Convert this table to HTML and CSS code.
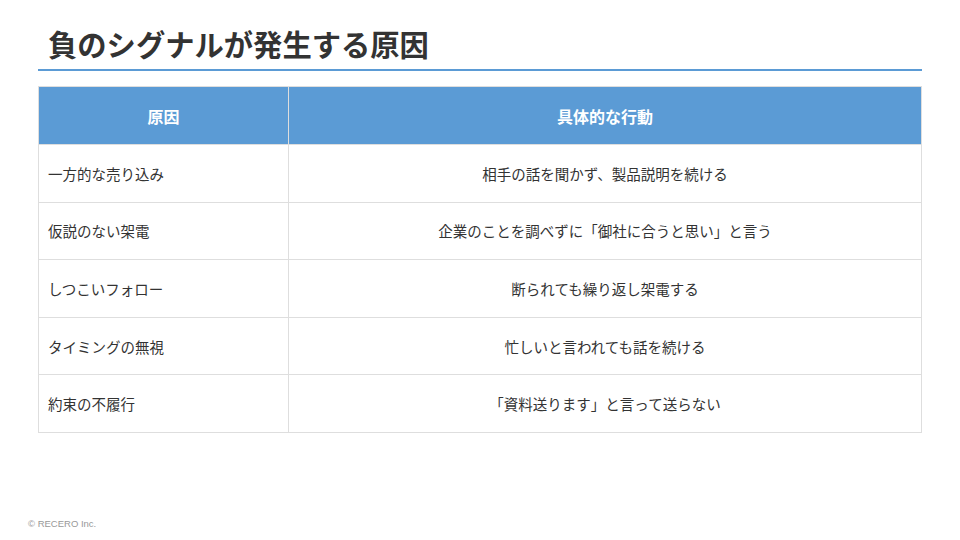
FILE: index.html
```html
<!DOCTYPE html>
<html lang="ja">
<head>
<meta charset="utf-8">
<link rel="stylesheet" href="styles.css">
</head>
<body>
<div class="slide">
  <header class="slide-head">
    <h1 class="title">負のシグナルが発生する原因</h1>
  </header>
  <table class="grid">
    <thead>
      <tr><th class="c1">原因</th><th class="c2">具体的な行動</th></tr>
    </thead>
    <tbody>
      <tr><td class="c1">一方的な売り込み</td><td class="c2">相手の話を聞かず、製品説明を続ける</td></tr>
      <tr><td class="c1">仮説のない架電</td><td class="c2">企業のことを調べずに「御社に合うと思い」と言う</td></tr>
      <tr><td class="c1">しつこいフォロー</td><td class="c2">断られても繰り返し架電する</td></tr>
      <tr><td class="c1">タイミングの無視</td><td class="c2">忙しいと言われても話を続ける</td></tr>
      <tr><td class="c1">約束の不履行</td><td class="c2">「資料送ります」と言って送らない</td></tr>
    </tbody>
  </table>
  <footer class="foot">© RECERO Inc.</footer>
</div>
</body>
</html>
```
FILE: styles.css
```css
html, body {
  margin: 0;
  padding: 0;
  background: #fff;
}
.slide {
  width: 960px;
  height: 540px;
  position: relative;
  box-sizing: border-box;
  padding: 0 38px 0 38px;
  font-family: "Noto Sans CJK JP", "Noto Sans", sans-serif;
  color: #333;
}
.slide-head {
  padding-top: 23px;
  padding-bottom: 5px;
  border-bottom: 2px solid #5b9bd5;
}
.title {
  margin: 0;
  padding-left: 10px;
  font-size: 29.3px;
  line-height: 41px;
  font-weight: 700;
  color: #333;
}
.grid {
  margin-top: 15px;
  width: 100%;
  border-collapse: collapse;
  table-layout: fixed;
}
.grid th, .grid td {
  border: 1px solid #dedede;
  padding: 0 9px;
}
.grid th {
  background: #5b9bd5;
  color: #fff;
  font-size: 16px;
  font-weight: 700;
  height: 57px;
  text-align: center;
}
.grid td {
  font-size: 14.5px;
  height: 56.6px;
  color: #333;
}
.grid th.c1 { width: 231px; }
.grid td.c1 { text-align: left; }
.grid td.c2 { text-align: center; }
.foot {
  position: absolute;
  left: 28px;
  bottom: 11px;
  font-family: "Liberation Sans", Arial, sans-serif;
  font-size: 9.5px;
  color: #999;
}
```
